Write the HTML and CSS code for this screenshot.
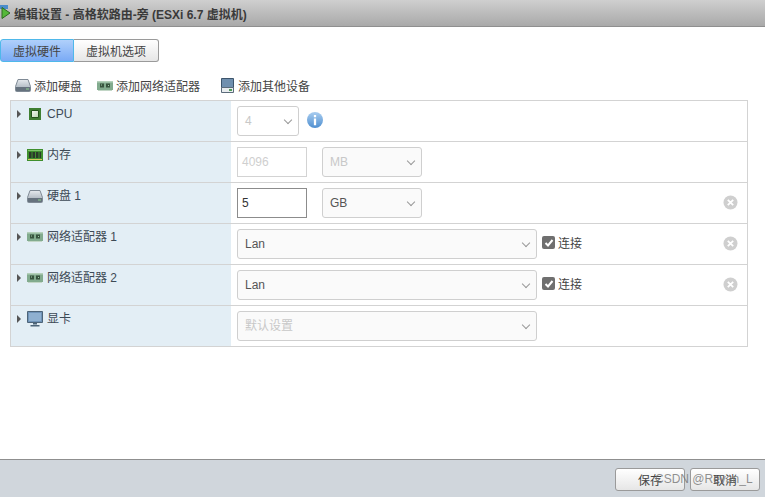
FILE: index.html
```html
<!DOCTYPE html>
<html lang="zh">
<head>
<meta charset="utf-8">
<title>编辑设置</title>
<link rel="stylesheet" href="styles.css">
</head>
<body>
<svg class="defs" width="0" height="0">
  <defs>
    <linearGradient id="disk" x1="0" y1="0" x2="0" y2="1"><stop offset="0" stop-color="#e6eaee"/><stop offset="1" stop-color="#99a4af"/></linearGradient>
    <linearGradient id="ball" x1="0" y1="0" x2="0" y2="1"><stop offset="0" stop-color="#a9cdf0"/><stop offset="1" stop-color="#4f8fd0"/></linearGradient>
    <linearGradient id="chip" x1="0" y1="0" x2="1" y2="1"><stop offset="0" stop-color="#f4f8f2"/><stop offset="1" stop-color="#bcd8b4"/></linearGradient>
    <symbol id="hdd" viewBox="0 0 16 13">
      <path d="M3 .5h10l2.500 7v4a1 1 0 0 1-1 1h-13a1 1 0 0 1-1-1v-4z" fill="url(#disk)" stroke="#7f8a95"/>
      <path d="M1 8h14v4H1z" fill="#66727e"/>
      <path d="M11 9.500h3v1h-3z" fill="#8fd08f"/>
    </symbol>
    <symbol id="nic" viewBox="0 0 16 10">
      <path d="M0 0h16v9H0z" fill="#82ab8e"/>
      <path d="M0 0h16v1.500H0z" fill="#b4d0ba"/>
      <path d="M3 2.500h4v4H3zM9 2.500h4v4H9z" fill="#38543f"/>
      <path d="M4 3.500h1v1H4zM11 4h1v1h-1z" fill="#9fd0a8"/>
      <path d="M1 9h14v1H1z" fill="#c2d6c6"/>
    </symbol>
    <symbol id="remove-ic" viewBox="0 0 15 15">
      <circle cx="7.500" cy="7.500" r="7" fill="#cfcfcf"/>
      <path d="M4.800 4.800l5.400 5.400M10.200 4.800l-5.400 5.400" stroke="#fff" stroke-width="1.800"/>
    </symbol>
    <symbol id="check-ic" viewBox="0 0 10 10">
      <path d="M1.500 5l2.500 2.500L8.500 2" fill="none" stroke="#fff" stroke-width="2"/>
    </symbol>
  </defs>
</svg>
<div class="dialog">
  <header class="titlebar">
    <svg class="title-icon" width="12" height="16" viewBox="0 0 12 16"><path d="M0 0h8v4H0z" fill="#4a8ccc"/><path d="M2 2.500l8 5.500-8 5.500z" fill="#55b83a" stroke="#2d6a20"/></svg>
    <span class="title-text">编辑设置 - 高格软路由-旁 (ESXi 6.7 虚拟机)</span>
  </header>

  <nav class="tabs">
    <button class="tab tab-active">虚拟硬件</button>
    <button class="tab">虚拟机选项</button>
  </nav>

  <div class="toolbar">
    <span class="tool tool-disk"><svg class="ic-hdd"><use href="#hdd"/></svg>添加硬盘</span>
    <span class="tool tool-nic"><svg class="ic-nic"><use href="#nic"/></svg>添加网络适配器</span>
    <span class="tool tool-other">
      <svg class="ic-other" viewBox="0 0 13 15"><path d="M.5.500h12v9H.5z" fill="#6f8fae" stroke="#3d556c"/><path d="M.5 9.500h12v5H.5z" fill="#e8ecef" stroke="#5b6b7a"/><path d="M8 11h3v2H8z" fill="#4f9d57"/></svg>添加其他设备
    </span>
  </div>

  <div class="table">
    <div class="row">
      <div class="label">
        <i class="arrow"></i>
        <span class="icon-slot"><svg width="12" height="12" viewBox="0 0 12 12"><path d="M0 0h12v12H0z" fill="#3f7f32"/><path d="M2.500 2.500h7v7h-7z" fill="url(#chip)" stroke="#24561c"/></svg></span>
        <span>CPU</span>
      </div>
      <div class="cell">
        <div class="select select-cpu is-disabled">4<i class="chev"></i></div>
        <svg class="info" width="16" height="16" viewBox="0 0 17 17"><circle cx="8.500" cy="8.500" r="8.500" fill="url(#ball)"/><path d="M7.300 3.200h2.400v2.300H7.300zM7.300 7h2.400v7H7.300z" fill="#fff"/></svg>
      </div>
    </div>

    <div class="row">
      <div class="label">
        <i class="arrow"></i>
        <span class="icon-slot"><svg width="16" height="12" viewBox="0 0 16 12"><path d="M0 0h16v12H0z" fill="#3f8f2e"/><path d="M1 1h14v1H1z" fill="#7fc26a"/><path d="M2 3h2.500v6H2zM5.500 3H8v6H5.500zM9 3h2.500v6H9zM12.500 3H14v6h-1.500z" fill="#2b3a2a"/><path d="M1 10h14v1H1z" fill="#d6c860"/></svg></span>
        <span>内存</span>
      </div>
      <div class="cell">
        <div class="input input-off">4096</div>
        <div class="select select-unit is-disabled">MB<i class="chev"></i></div>
      </div>
    </div>

    <div class="row">
      <div class="label">
        <i class="arrow"></i>
        <span class="icon-slot"><svg class="ic-hdd"><use href="#hdd"/></svg></span>
        <span>硬盘 1</span>
      </div>
      <div class="cell">
        <div class="input input-on">5</div>
        <div class="select select-unit">GB<i class="chev"></i></div>
      </div>
      <svg class="remove"><use href="#remove-ic"/></svg>
    </div>

    <div class="row">
      <div class="label">
        <i class="arrow"></i>
        <span class="icon-slot"><svg class="ic-nic"><use href="#nic"/></svg></span>
        <span>网络适配器 1</span>
      </div>
      <div class="cell">
        <div class="select select-wide">Lan<i class="chev"></i></div>
        <span class="check"><svg class="ic-check"><use href="#check-ic"/></svg></span>
        <span class="check-label">连接</span>
      </div>
      <svg class="remove"><use href="#remove-ic"/></svg>
    </div>

    <div class="row">
      <div class="label">
        <i class="arrow"></i>
        <span class="icon-slot"><svg class="ic-nic"><use href="#nic"/></svg></span>
        <span>网络适配器 2</span>
      </div>
      <div class="cell">
        <div class="select select-wide">Lan<i class="chev"></i></div>
        <span class="check"><svg class="ic-check"><use href="#check-ic"/></svg></span>
        <span class="check-label">连接</span>
      </div>
      <svg class="remove"><use href="#remove-ic"/></svg>
    </div>

    <div class="row">
      <div class="label">
        <i class="arrow"></i>
        <span class="icon-slot"><svg width="16" height="16" viewBox="0 0 16 16"><path d="M.5.500h15v11H.5z" fill="#6f93b8" stroke="#4d6478"/><path d="M2 2h12v8H2z" fill="#8fb0d0"/><path d="M6 12h4v1.500H6zM3.500 14h9v1.500h-9z" fill="#4d6478"/></svg></span>
        <span>显卡</span>
      </div>
      <div class="cell">
        <div class="select select-wide is-disabled">默认设置<i class="chev"></i></div>
      </div>
    </div>
  </div>

  <footer class="footer">
    <button class="btn">保存</button>
    <button class="btn">取消</button>
    <span class="watermark">CSDN @Revan_L</span>
  </footer>
</div>
</body>
</html>
```
FILE: styles.css
```css
* { box-sizing: border-box; }
html, body { margin: 0; padding: 0; height: 100%; }
body {
  font-family: "Liberation Sans", "Noto Sans CJK SC", sans-serif;
  font-size: 12px;
  color: #333;
  background: #fff;
  overflow: hidden;
}
.defs { position: absolute; }
.dialog { position: relative; width: 765px; height: 497px; display: flex; flex-direction: column; }

.titlebar {
  height: 27px;
  flex: none;
  display: flex;
  align-items: center;
  padding-left: 0;
  gap: 2px;
  background: linear-gradient(#cfcfcf, #a9a9a9);
  border-bottom: 1px solid #8f8f8f;
  font-weight: bold;
  font-size: 12px;
  color: #3a3a3a;
}

.tabs { display: flex; margin-top: 12px; height: 23px; flex: none; }
.tab {
  font: inherit;
  color: #444;
  padding: 0;
  width: 85px;
  height: 23px;
  border: 1px solid #9a9a9a;
  border-left: 0;
  border-radius: 0 3px 3px 0;
  background: linear-gradient(#fff, #e6e6e6);
}
.tab-active {
  width: 74px;
  border: 1px solid #4fb8ea;
  border-radius: 3px 0 0 3px;
  background: linear-gradient(#b0d0fb, #7aaaf5);
}

.toolbar { height: 38px; flex: none; position: relative; display: flex; align-items: center; padding: 9px 0 0 15px; }
.tool { display: flex; align-items: center; gap: 3px; color: #444; }
.tool-nic { margin-left: 15px; }
.tool-other { margin-left: 21px; gap: 4px; }
.ic-hdd { width: 16px; height: 13px; }
.ic-nic { width: 16px; height: 10px; }
.ic-other { width: 13px; height: 15px; }

.table {
  width: 738px;
  margin-left: 10px;
  border: 1px solid #d3d3d3;
  border-bottom: 0;
  flex: none;
}
.row {
  position: relative;
  height: 41px;
  display: flex;
  border-bottom: 1px solid #d3d3d3;
}
.label {
  width: 220px;
  flex: none;
  background: #e3eef5;
  display: flex;
  align-items: flex-start;
  padding: 5px 0 0 6px;
  line-height: 16px;
  color: #3d4a55;
}
.arrow {
  width: 0; height: 0;
  margin-top: 4px;
  border-left: 4px solid #555;
  border-top: 4px solid transparent;
  border-bottom: 4px solid transparent;
}
.icon-slot { width: 16px; margin: 0 4px 0 6px; height: 16px; display: flex; align-items: center; justify-content: center; }
.cell { display: flex; align-items: flex-start; padding: 5px 0 0 6px; flex: 1; }

.select {
  position: relative;
  height: 30px;
  line-height: 28px;
  padding-left: 7px;
  border: 1px solid #cfcfcf;
  border-radius: 3px;
  background: #fafafa;
  color: #555;
}
.select-cpu { width: 62px; background: #fff; }
.select-unit { width: 100px; margin-left: 15px; }
.select-wide { width: 300px; }
.is-disabled { color: #c8c8c8; }
.chev {
  position: absolute;
  right: 7px;
  top: 10px;
  width: 6px;
  height: 6px;
  border-right: 1px solid #999;
  border-bottom: 1px solid #999;
  transform: rotate(45deg);
}
.input { width: 70px; height: 30px; line-height: 28px; padding-left: 4px; border: 1px solid #d3d3d3; }
.input-off { color: #cfcfcf; }
.input-on { border-color: #8c8c8c; color: #333; }
.info { margin: 6px 0 0 8px; }

.check {
  width: 13px; height: 13px;
  margin: 7px 0 0 5px;
  border-radius: 2px;
  background: #6f6f6f;
  display: flex; align-items: center; justify-content: center;
}
.ic-check { width: 10px; height: 10px; }
.check-label { margin: 7px 0 0 3px; line-height: 16px; color: #444; }
.remove { position: absolute; right: 9px; top: 12px; width: 15px; height: 15px; }

.footer {
  position: relative;
  margin-top: auto;
  height: 38px;
  flex: none;
  background: #d0d6dc;
  border-top: 1px solid #8f8f8f;
  display: flex;
  justify-content: flex-end;
  gap: 5px;
  padding: 8px 5px 0 0;
}
.btn {
  width: 70px;
  height: 23px;
  font: inherit;
  color: #444;
  border: 1px solid #9a9a9a;
  border-radius: 3px;
  background: linear-gradient(#fff, #e6e6e6);
  padding: 0;
}
.watermark {
  position: absolute;
  left: 655px;
  top: 12px;
  font-size: 12px;
  color: rgba(110, 110, 110, .75);
}
```
